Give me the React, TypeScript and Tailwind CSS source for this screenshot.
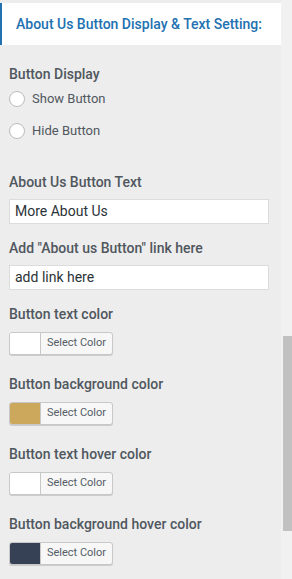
export default function App() {
  const colors = [
    { label: "Button text color", value: "#ffffff" },
    { label: "Button background color", value: "#cba85c" },
    { label: "Button text hover color", value: "#ffffff" },
    { label: "Button background hover color", value: "#374155" },
  ];

  return (
    <div
      className="flex h-[579px] bg-[#ededed] overflow-hidden"
      style={{ fontFamily: "Roboto, 'Liberation Sans', sans-serif" }}
    >
      <div className="w-[281px] pt-[3px]">
        <div className="h-[42px] bg-white border-l-2 border-[#2271b1] flex items-center pl-[14px]">
          <h2 className="text-[14px] font-medium text-[#2271b1]">
            About Us Button Display &amp; Text Setting:
          </h2>
        </div>

        <div className="px-[9px]">
          <p className="mt-[19px] text-[14px] leading-5 font-medium text-[#50575e]">
            Button Display
          </p>
          <div className="mt-[5px] flex flex-col gap-3">
            {["Show Button", "Hide Button"].map(t => (
              <label key={t} className="flex items-center h-5 gap-[7px]">
                <span className="w-4 h-4 rounded-full bg-white border border-[#b9bcc0]" />
                <span className="text-[13px] text-[#50575e]">{t}</span>
              </label>
            ))}
          </div>

          <p className="mt-[31px] text-[14px] leading-5 font-medium text-[#50575e]">
            About Us Button Text
          </p>
          <div className="mt-[7px] h-[25px] w-[260px] bg-white border border-[#dcdcde] flex items-center px-[5px] text-[14px] text-[#2c3338]">
            More About Us
          </div>

          <p className="mt-[14px] text-[14px] leading-5 font-medium text-[#50575e]">
            Add "About us Button" link here
          </p>
          <div className="mt-[7px] h-[25px] w-[260px] bg-white border border-[#dcdcde] flex items-center px-[5px] text-[14px] text-[#2c3338]">
            add link here
          </div>

          <div className="mt-[14px] flex flex-col gap-[19px]">
            {colors.map(c => (
              <div key={c.label}>
                <p className="text-[14px] leading-5 font-medium text-[#50575e]">
                  {c.label}
                </p>
                <div className="mt-[8px] h-[23px] w-[104px] flex rounded-[3px] border border-[#c8c8c8] bg-[#f7f7f7] shadow-[0_1px_0_#cccccc] overflow-hidden">
                  <span
                    className="w-[31px] h-full border-r border-[#c8c8c8]"
                    style={{ background: c.value }}
                  />
                  <span className="flex-1 flex items-center justify-center text-[11px] text-[#555d66]">
                    Select Color
                  </span>
                </div>
              </div>
            ))}
          </div>
        </div>
      </div>

      <div className="flex-1 bg-[#f1f1f1]">
        <div className="mt-[336px] ml-[2px] h-[195px] bg-[#c1c1c1]" />
      </div>
    </div>
  );
}
